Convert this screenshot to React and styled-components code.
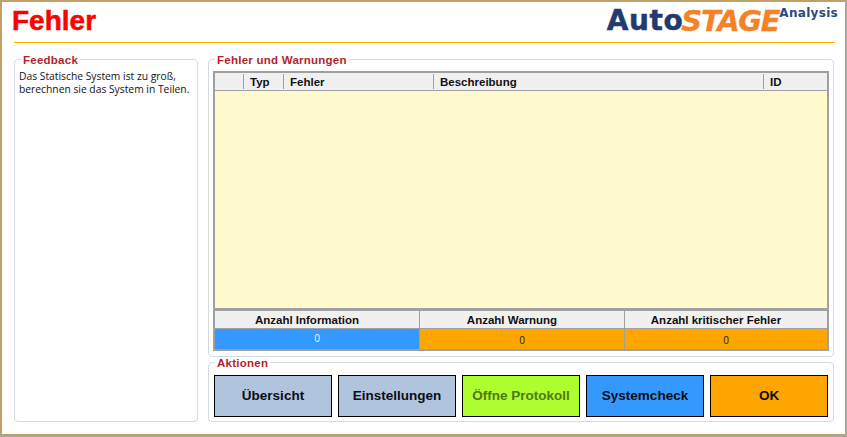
import React from "react";
import styled, { createGlobalStyle } from "styled-components";

const Global = createGlobalStyle`
  html, body { margin: 0; padding: 0; background: #fff; }
  * { box-sizing: border-box; }
`;

const Frame = styled.div`
  width: 847px;
  height: 437px;
  overflow: hidden;
  background: #a9a9a0;
  padding: 0 1px 1px 0;
  font-family: "Liberation Sans", Arial, sans-serif;
`;
const Window = styled.div`
  height: 100%;
  background: #fff;
  border: 2px solid #c19f66;
  border-right-width: 1px;
  padding: 0 10px 0 12px;
  display: flex;
  flex-direction: column;
`;
const Header = styled.header`
  height: 41px;
  border-bottom: 1px solid #ffae00;
  display: flex;
  justify-content: space-between;
  align-items: flex-start;
`;
const Title = styled.h1`
  margin: 3px 0 0 -2px;
  font-size: 28px;
  line-height: 32px;
  font-weight: 700;
  color: #ff0000;
  -webkit-text-stroke: 0.5px #ff0000;
`;
const Logo = styled.div`
  display: flex;
  align-items: flex-start;
  margin: 3px -3px 0 0;
  font-family: "DejaVu Sans", sans-serif;
  font-weight: 700;
`;
const LogoAuto = styled.span`
  font-size: 28px;
  line-height: 32px;
  color: #1f3b70;
  letter-spacing: 0.6px;
  -webkit-text-stroke: 0.5px #1f3b70;
`;
const LogoStage = styled.span`
  font-size: 29px;
  line-height: 32px;
  font-style: italic;
  color: #f58227;
  letter-spacing: -1.3px;
  margin-left: -2px;
  -webkit-text-stroke: 0.3px #f58227;
`;
const LogoSuffix = styled.span`
  font-size: 12px;
  line-height: 14px;
  margin-top: 1px;
  color: #2b4a80;
  letter-spacing: 0.3px;
`;
const Body = styled.div`
  flex: 1;
  display: grid;
  grid-template-columns: 184px 626px;
  column-gap: 10px;
  padding-top: 9px;
  align-items: start;
`;
const Group = styled.fieldset`
  margin: 0;
  min-width: 0;
  border: 1px solid #d3dbe2;
  border-radius: 4px;
  padding: 0 4px;
`;
const Legend = styled.legend`
  margin-left: 2px;
  padding: 2px 2px 0;
  font-family: "Liberation Sans", Arial, sans-serif;
  font-size: 11.5px;
  line-height: 12px;
  font-weight: 700;
  color: #b21f2d;
  letter-spacing: 0.25px;
`;
const FeedbackGroup = styled(Group)`
  height: 370px;
`;
const Message = styled.p`
  margin: 0;
  padding-top: 4px;
  font-family: "Open Sans", sans-serif;
  font-size: 10.3px;
  line-height: 13px;
  color: #111;
`;
const RightColumn = styled.div`
  display: flex;
  flex-direction: column;
`;
const ErrorsGroup = styled(Group)`
  height: 305px;
`;
const Table = styled.div`
  width: 616px;
  height: 280px;
  margin-top: 5px;
  border: 2px solid #a0a0a0;
  display: flex;
  flex-direction: column;
`;
const HeadRow = styled.div`
  height: 18px;
  flex: none;
  display: grid;
  grid-template-columns: 28px 40px 150px 330px 1fr;
  background: #f0f0f0;
  border-bottom: 1px solid #a0a0a0;
`;
const HeadCell = styled.div`
  font-size: 11.5px;
  font-weight: 700;
  padding-left: 6px;
  color: #111;
  display: flex;
  align-items: center;
  border-left: ${(p) => (p.$first ? "none" : "1px solid #a0a0a0")};
  height: 15px;
  margin-top: 1px;
`;
const TableFill = styled.div`
  flex: 1;
  background: #fffacd;
`;
const Summary = styled.div`
  flex: none;
  height: 41px;
  display: grid;
  grid-template-columns: 204px 205px 1fr;
  grid-template-rows: 18px 20px;
  background: #f0f0f0;
  border-top: 3px solid #a0a0a0;
`;
const SummaryHead = styled.div`
  padding-right: 20px;
  font-size: 11.5px;
  font-weight: 700;
  color: #111;
  text-align: center;
  line-height: 19px;
  border-bottom: 1px solid #a0a0a0;
  border-left: ${(p) => (p.$first ? "none" : "1px solid #a0a0a0")};
`;
const SummaryValue = styled.div`
  font-family: "Open Sans", sans-serif;
  font-size: 10px;
  line-height: ${(p) => (p.$tone === "info" ? "18px" : "22px")};
  text-align: center;
  color: ${(p) => (p.$tone === "info" ? "#f4f4f4" : "#222")};
  background: ${(p) => (p.$tone === "info" ? "#3399ff" : "#ffa500")};
  border-left: ${(p) => (p.$first ? "none" : "1px solid #a0a0a0")};
`;
const ActionsGroup = styled(Group)`
  height: 67px;
  margin-top: -2px;
`;
const Buttons = styled.div`
  display: flex;
  gap: 6px;
  padding: 6px 0 0 1px;
`;
const ActionButton = styled.button`
  width: 118px;
  height: 42px;
  padding: 0 0 1px;
  border: 1px solid #000;
  border-radius: 0;
  background: ${(p) => p.$bg};
  color: ${(p) => p.$fg || "#0c0c14"};
  font-family: "Liberation Sans", Arial, sans-serif;
  font-size: 13.5px;
  font-weight: 700;
`;

export default function App() {
  return (
    <>
      <Global />
      <Frame>
        <Window>
          <Header>
            <Title>Fehler</Title>
            <Logo>
              <LogoAuto>Auto</LogoAuto>
              <LogoStage>STAGE</LogoStage>
              <LogoSuffix>Analysis</LogoSuffix>
            </Logo>
          </Header>
          <Body>
            <FeedbackGroup>
              <Legend>Feedback</Legend>
              <Message>
                Das Statische System ist zu groß,
                <br />
                berechnen sie das System in Teilen.
              </Message>
            </FeedbackGroup>
            <RightColumn>
              <ErrorsGroup>
                <Legend>Fehler und Warnungen</Legend>
                <Table>
                  <HeadRow>
                    <HeadCell $first />
                    <HeadCell>Typ</HeadCell>
                    <HeadCell>Fehler</HeadCell>
                    <HeadCell>Beschreibung</HeadCell>
                    <HeadCell>ID</HeadCell>
                  </HeadRow>
                  <TableFill />
                  <Summary>
                    <SummaryHead $first>Anzahl Information</SummaryHead>
                    <SummaryHead>Anzahl Warnung</SummaryHead>
                    <SummaryHead>Anzahl kritischer Fehler</SummaryHead>
                    <SummaryValue $first $tone="info">0</SummaryValue>
                    <SummaryValue $tone="warn">0</SummaryValue>
                    <SummaryValue $tone="warn">0</SummaryValue>
                  </Summary>
                </Table>
              </ErrorsGroup>
              <ActionsGroup>
                <Legend>Aktionen</Legend>
                <Buttons>
                  <ActionButton $bg="#b0c4de">Übersicht</ActionButton>
                  <ActionButton $bg="#b0c4de">Einstellungen</ActionButton>
                  <ActionButton $bg="#adff2f" $fg="#4d7a12">Öffne Protokoll</ActionButton>
                  <ActionButton $bg="#3399ff">Systemcheck</ActionButton>
                  <ActionButton $bg="#ffa500">OK</ActionButton>
                </Buttons>
              </ActionsGroup>
            </RightColumn>
          </Body>
        </Window>
      </Frame>
    </>
  );
}
